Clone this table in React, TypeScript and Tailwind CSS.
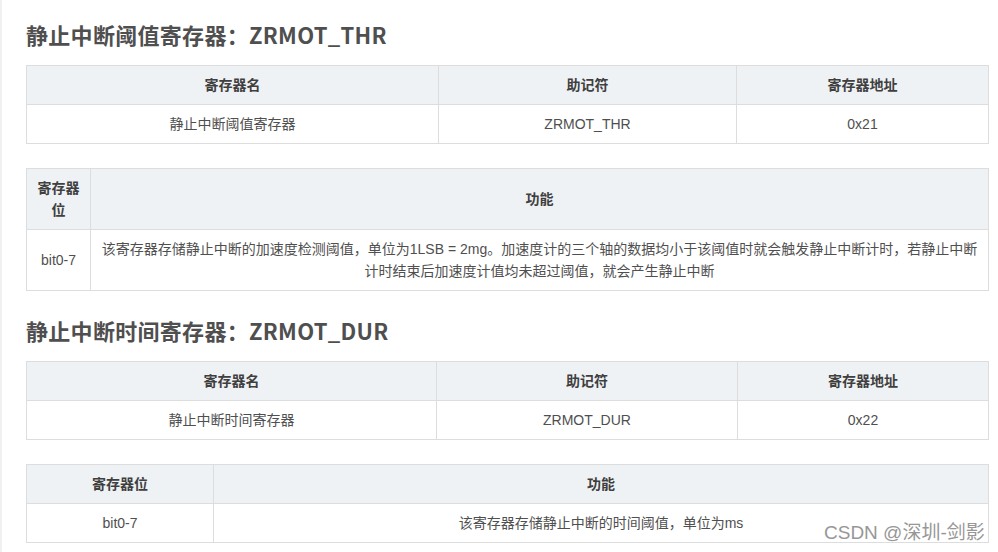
import React from "react";

const cjk = { fontFamily: '"Liberation Sans", "Noto Sans CJK SC", sans-serif' };
const title = { fontFamily: '"Noto Sans CJK SC", "Liberation Sans", sans-serif' };

function Th({ children }: { children: React.ReactNode }) {
  return (
    <th className="border border-[#dddddd] bg-[#eff2f5] px-[10px] py-2 text-center text-[14px] font-bold leading-[22px] text-[#3f3f3f]">
      {children}
    </th>
  );
}
function Td({ children }: { children: React.ReactNode }) {
  return (
    <td className="border border-[#dddddd] bg-white px-[10px] py-2 text-center text-[14px] font-normal leading-[22px] text-[#4f4f4f]">
      {children}
    </td>
  );
}

function Table({ widths, head, body }: { widths: number[]; head: React.ReactNode[]; body: React.ReactNode[] }) {
  return (
    <table className="w-[962px] table-fixed border-collapse" style={cjk}>
      <colgroup>
        {widths.map((w, i) => (
          <col key={i} style={{ width: w }} />
        ))}
      </colgroup>
      <thead>
        <tr>
          {head.map((h, i) => (
            <Th key={i}>{h}</Th>
          ))}
        </tr>
      </thead>
      <tbody>
        <tr>
          {body.map((b, i) => (
            <Td key={i}>{b}</Td>
          ))}
        </tr>
      </tbody>
    </table>
  );
}

export default function App() {
  return (
    <div className="relative h-[552px] w-[998px] overflow-hidden bg-white">
      <div className="h-full border-l-2 border-[#f0f0f0] pl-[24px]">
        <h2 className="pt-[18px] text-[22px] font-bold leading-[32px] tracking-[0.3px] text-[#4f4f4f]" style={title}>
          静止中断阈值寄存器：ZRMOT_THR
        </h2>
        <div className="mt-[15px]">
          <Table widths={[412, 298, 252]} head={["寄存器名", "助记符", "寄存器地址"]} body={["静止中断阈值寄存器", "ZRMOT_THR", "0x21"]} />
        </div>
        <div className="mt-[24px]">
          <Table
            widths={[64, 898]}
            head={["寄存器位", "功能"]}
            body={[
              "bit0-7",
              "该寄存器存储静止中断的加速度检测阈值，单位为1LSB = 2mg。加速度计的三个轴的数据均小于该阈值时就会触发静止中断计时，若静止中断计时结束后加速度计值均未超过阈值，就会产生静止中断",
            ]}
          />
        </div>
        <h2 className="mt-[23px] text-[22px] font-bold leading-[32px] tracking-[0.3px] text-[#4f4f4f]" style={title}>
          静止中断时间寄存器：ZRMOT_DUR
        </h2>
        <div className="mt-[15px]">
          <Table widths={[410, 301, 251]} head={["寄存器名", "助记符", "寄存器地址"]} body={["静止中断时间寄存器", "ZRMOT_DUR", "0x22"]} />
        </div>
        <div className="mt-[24px]">
          <Table widths={[187, 775]} head={["寄存器位", "功能"]} body={["bit0-7", "该寄存器存储静止中断的时间阈值，单位为ms"]} />
        </div>
      </div>
      <div
        className="absolute left-[824px] top-[520px] text-[19px] leading-[26px] text-[#8c8c8c] opacity-90"
        style={{ fontFamily: '"Liberation Sans", "Noto Sans CJK SC", sans-serif' }}
      >
        CSDN @深圳-剑影
      </div>
    </div>
  );
}
